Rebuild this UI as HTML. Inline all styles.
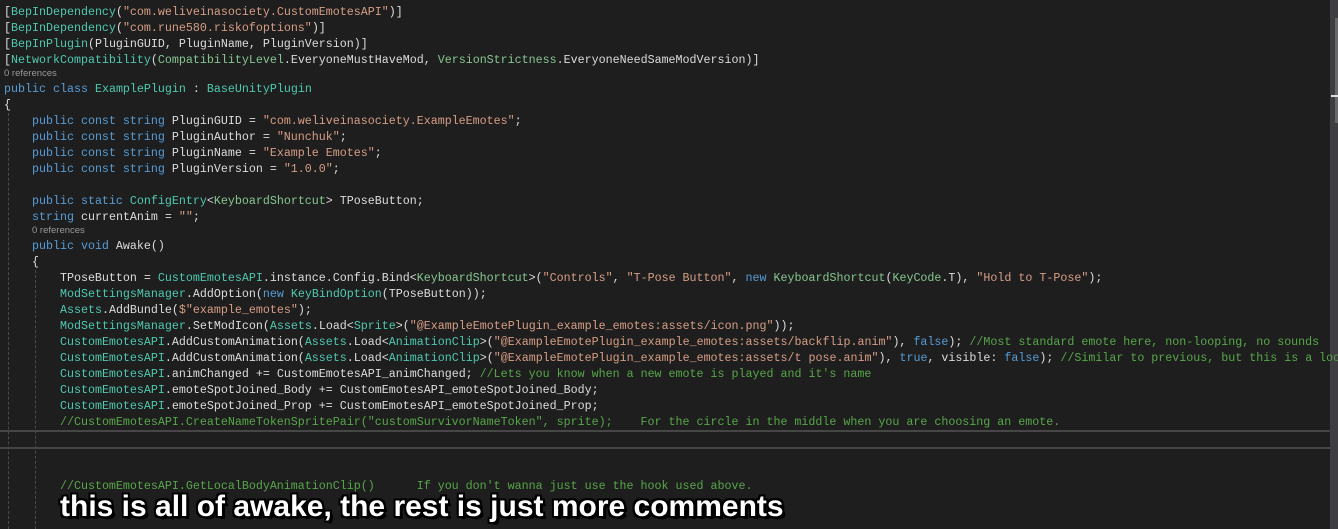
<!DOCTYPE html>
<html><head><meta charset="utf-8"><style>
html,body{margin:0;padding:0;background:#1e1e1e;width:1338px;height:529px;overflow:hidden;position:relative}
.l{position:absolute;left:4px;height:16px;line-height:16px;font-family:"Liberation Mono",monospace;font-size:11.67px;color:#dcdcdc;white-space:pre}
.r{position:absolute;font-family:"Liberation Sans",sans-serif;font-size:9.5px;color:#999;line-height:12px}
.k{color:#569cd6}.t{color:#4ec9b0}.s{color:#d69d85}.c{color:#57a64a}.g{color:#86c691}
.guide{position:absolute;width:0;border-left:1px dashed #4a4a4a}
.cap{position:absolute;left:60px;top:490px;font-family:"Liberation Sans",sans-serif;font-weight:bold;font-size:30px;color:#fff;letter-spacing:0;
text-shadow:2px 2px 0 #000,-2px -2px 0 #000,2px -2px 0 #000,-2px 2px 0 #000,0 2px 0 #000,2px 0 0 #000,0 -2px 0 #000,-2px 0 0 #000,3px 3px 0 #000;white-space:pre}
</style></head><body>
<div class="guide" style="left:8px;top:113px;height:416px"></div>
<div class="guide" style="left:35px;top:270px;height:259px"></div>
<div style="position:absolute;left:0;top:430px;width:1330px;height:15px;border-top:2px solid #464646;border-bottom:2px solid #464646"></div>
<div style="position:absolute;left:1330px;top:0;width:8px;height:529px;background:#3e3e42"></div>
<div style="position:absolute;left:1335px;top:18px;width:3px;height:105px;background:#686868"></div>
<div style="position:absolute;left:1331px;top:95px;width:7px;height:2px;background:#ddd"></div>

<div class="l" style="top:4px">[<span class="t">BepInDependency</span>(<span class="s">"com.weliveinasociety.CustomEmotesAPI"</span>)]</div>
<div class="l" style="top:20px">[<span class="t">BepInDependency</span>(<span class="s">"com.rune580.riskofoptions"</span>)]</div>
<div class="l" style="top:36px">[<span class="t">BepInPlugin</span>(PluginGUID, PluginName, PluginVersion)]</div>
<div class="l" style="top:52px">[<span class="t">NetworkCompatibility</span>(<span class="g">CompatibilityLevel</span>.EveryoneMustHaveMod, <span class="g">VersionStrictness</span>.EveryoneNeedSameModVersion)]</div>
<div class="r" style="left:4px;top:68px">0 references</div>
<div class="l" style="top:81px"><span class="k">public class</span> <span class="t">ExamplePlugin</span> : <span class="t">BaseUnityPlugin</span></div>
<div class="l" style="top:97px">{</div>
<div class="l" style="top:113px">    <span class="k">public const string</span> PluginGUID = <span class="s">"com.weliveinasociety.ExampleEmotes"</span>;</div>
<div class="l" style="top:129px">    <span class="k">public const string</span> PluginAuthor = <span class="s">"Nunchuk"</span>;</div>
<div class="l" style="top:145px">    <span class="k">public const string</span> PluginName = <span class="s">"Example Emotes"</span>;</div>
<div class="l" style="top:161px">    <span class="k">public const string</span> PluginVersion = <span class="s">"1.0.0"</span>;</div>
<div class="l" style="top:193px">    <span class="k">public static</span> <span class="t">ConfigEntry</span>&lt;<span class="g">KeyboardShortcut</span>&gt; TPoseButton;</div>
<div class="l" style="top:209px">    <span class="k">string</span> currentAnim = <span class="s">""</span>;</div>
<div class="r" style="left:32px;top:225px">0 references</div>
<div class="l" style="top:238px">    <span class="k">public void</span> Awake()</div>
<div class="l" style="top:254px">    {</div>
<div class="l" style="top:270px">        TPoseButton = <span class="t">CustomEmotesAPI</span>.instance.Config.Bind&lt;<span class="g">KeyboardShortcut</span>&gt;(<span class="s">"Controls"</span>, <span class="s">"T-Pose Button"</span>, <span class="k">new</span> <span class="g">KeyboardShortcut</span>(<span class="g">KeyCode</span>.T), <span class="s">"Hold to T-Pose"</span>);</div>
<div class="l" style="top:286px">        <span class="t">ModSettingsManager</span>.AddOption(<span class="k">new</span> <span class="t">KeyBindOption</span>(TPoseButton));</div>
<div class="l" style="top:302px">        <span class="t">Assets</span>.AddBundle(<span class="s">$"example_emotes"</span>);</div>
<div class="l" style="top:318px">        <span class="t">ModSettingsManager</span>.SetModIcon(<span class="t">Assets</span>.Load&lt;<span class="t">Sprite</span>&gt;(<span class="s">"@ExampleEmotePlugin_example_emotes:assets/icon.png"</span>));</div>
<div class="l" style="top:334px">        <span class="t">CustomEmotesAPI</span>.AddCustomAnimation(<span class="t">Assets</span>.Load&lt;<span class="t">AnimationClip</span>&gt;(<span class="s">"@ExampleEmotePlugin_example_emotes:assets/backflip.anim"</span>), <span class="k">false</span>); <span class="c">//Most standard emote here, non-looping, no sounds</span></div>
<div class="l" style="top:350px">        <span class="t">CustomEmotesAPI</span>.AddCustomAnimation(<span class="t">Assets</span>.Load&lt;<span class="t">AnimationClip</span>&gt;(<span class="s">"@ExampleEmotePlugin_example_emotes:assets/t pose.anim"</span>), <span class="k">true</span>, visible: <span class="k">false</span>); <span class="c">//Similar to previous, but this is a looping one</span></div>
<div class="l" style="top:366px">        <span class="t">CustomEmotesAPI</span>.animChanged += CustomEmotesAPI_animChanged; <span class="c">//Lets you know when a new emote is played and it's name</span></div>
<div class="l" style="top:382px">        <span class="t">CustomEmotesAPI</span>.emoteSpotJoined_Body += CustomEmotesAPI_emoteSpotJoined_Body;</div>
<div class="l" style="top:398px">        <span class="t">CustomEmotesAPI</span>.emoteSpotJoined_Prop += CustomEmotesAPI_emoteSpotJoined_Prop;</div>
<div class="l" style="top:414px">        <span class="c">//CustomEmotesAPI.CreateNameTokenSpritePair("customSurvivorNameToken", sprite);    For the circle in the middle when you are choosing an emote.</span></div>
<div class="l" style="top:478px">        <span class="c">//CustomEmotesAPI.GetLocalBodyAnimationClip()      If you don't wanna just use the hook used above.</span></div>
<div class="cap">this is all of awake, the rest is just more comments</div>
</body></html>
